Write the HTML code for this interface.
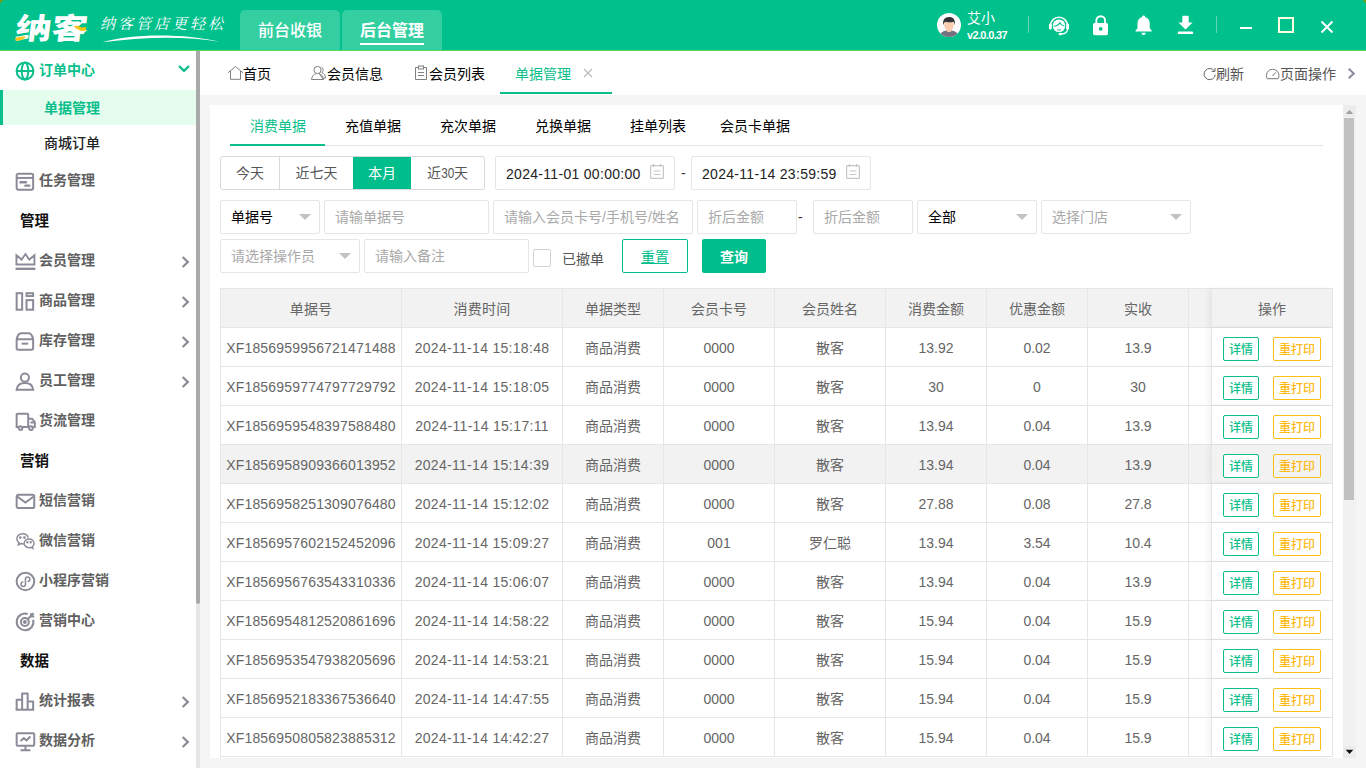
<!DOCTYPE html>
<html lang="zh-CN">
<head>
<meta charset="utf-8">
<title>单据管理</title>
<style>
*{box-sizing:border-box;margin:0;padding:0}
html,body{width:1366px;height:768px;overflow:hidden;background:#f5f5f5}
body{font-family:"Liberation Sans","Noto Sans CJK SC",sans-serif;font-size:14px;color:#333;position:relative}
.abs{position:absolute}
/* header */
#hd{position:absolute;left:0;top:0;width:1366px;height:51px;background:#00c08c;border-bottom:1px solid #52d866;border-radius:5px 5px 0 0}
.cnr{position:absolute;top:0;width:5px;height:5px;background:#7a9f04}
#logo{position:absolute;left:16px;top:7px;font-family:"Noto Sans CJK SC",sans-serif;font-weight:900;font-size:34px;line-height:40px;color:#fff;letter-spacing:0;transform:skewX(-7deg) scale(1.06,.86);transform-origin:0 50%;white-space:nowrap}
#slogan{position:absolute;left:100px;top:12px;font-family:"Noto Serif CJK SC",serif;font-style:italic;font-size:15px;line-height:22px;color:#fff;letter-spacing:3px;white-space:nowrap}
.htab{position:absolute;top:10px;height:40px;width:100px;background:#33cfa1;border-radius:5px 5px 0 0;color:#fff;font-size:16px;line-height:42px;text-align:center;font-weight:500}
.htab b{font-weight:700;display:inline-block;line-height:22px;border-bottom:2px solid #fff;padding-bottom:1px}
#user-name{position:absolute;left:967px;top:9px;color:#fff;font-size:14px;line-height:18px}
#user-ver{position:absolute;left:967px;top:28px;color:#fff;font-size:11px;line-height:14px;font-weight:700;letter-spacing:-.65px}
.vsep{position:absolute;top:16px;width:1px;height:17px;background:#5fd9b5}
/* tabs bar */
#tb{position:absolute;left:200px;top:51px;width:1166px;height:44px;background:#fff}
.tbi{position:absolute;top:1px;height:44px;line-height:44px;font-size:14px;color:#000;white-space:nowrap}
/* sidebar */
#sb{position:absolute;left:0;top:51px;width:196px;height:717px;background:#fff}
#sbs{position:absolute;left:196px;top:51px;width:4px;height:717px;background:#e6e6e6}
#sbs i{position:absolute;left:0;top:0;width:4px;height:553px;background:#aaa;border-radius:0 0 2px 2px}
.mi{position:absolute;left:0;width:196px;height:40px;line-height:40px;font-size:14px;color:#606060;font-weight:700}
.mi span{position:absolute;left:39px;top:0}
.mi svg.ic{position:absolute;left:14.5px;top:10.5px}
.mi svg.ar{position:absolute;left:180.5px;top:14.5px}
.mh{position:absolute;left:20px;height:40px;line-height:42px;font-size:14.5px;font-weight:700;color:#111}
/* card */
#card{position:absolute;left:210px;top:105px;width:1133px;height:653px;background:#fff;overflow:hidden}
#vs{position:absolute;left:1343px;top:105px;width:13px;height:653px;background:#f1f1f1}
#vs i{position:absolute;left:1px;top:13px;width:10px;height:382px;background:#c1c1c1}
#vs b{position:absolute;left:0;width:13px;height:12px;background:#ececec}
.itab{position:absolute;top:8px;height:32px;line-height:26px;font-size:14px;color:#000;white-space:nowrap}
.inp{position:absolute;height:34px;border:1px solid #e6e6e6;border-radius:2px;background:#fff;font-size:14px;line-height:32px;padding-left:10px;color:#000;white-space:nowrap;overflow:hidden}
.ph{color:#a9a9a9}
.dt{letter-spacing:.3px;color:#222;line-height:34px}
.inp .car{position:absolute;right:8.5px;top:13px;width:0;height:0;border:6px solid transparent;border-top:6px solid #c2c2c2;border-bottom:0}
/* table */
#tbl{position:absolute;left:10px;top:183px;width:1113px;height:480px;border-left:1px solid #e6e6e6;border-top:1px solid #e6e6e6}
.tr{position:absolute;left:0;width:1112px;height:39px;border-bottom:1px solid #e6e6e6;background:#fff}
.tr.h,.tr.hv{background:#f2f2f2}
.td{position:absolute;top:0;height:38px;line-height:40px;text-align:center;border-right:1px solid #e6e6e6;font-size:14px;color:#666;white-space:nowrap;overflow:hidden}
.c1{left:0;width:181px;letter-spacing:.18px}.c2{left:181px;width:161px;letter-spacing:.3px}.c3{left:342px;width:101px}.c4{left:443px;width:111px}.c5{left:554px;width:111px}.c6{left:665px;width:101px}.c7{left:766px;width:101px}.c8{left:867px;width:101px}.c9{left:968px;width:101px}
.fx{position:absolute;left:990px;top:0;width:122px;height:38px;border-left:1px solid #e6e6e6;border-right:1px solid #e6e6e6;background:inherit;text-align:center;line-height:40px;color:#666;box-shadow:-3px 0 6px rgba(0,0,0,.05)}
.b1,.b2{position:absolute;top:9px;height:24px;line-height:25px;font-size:12px;border-radius:2px;text-align:center;background:#fff;font-weight:500}
.b1{left:11px;width:36px;border:1px solid #0abf8b;color:#0abf8b}
.b2{left:61px;width:48px;border:1px solid #fdc011;color:#fdb913}
.tr.hv .b2{background:#f2f2f2}
</style>
</head>
<body>
<div class="cnr" style="left:0"></div><div class="cnr" style="left:1361px"></div>
<div id="hd">
  <div id="logo">纳客</div>
  <div id="slogan">纳客管店更轻松</div>
  <div class="htab" style="left:240px">前台收银</div>
  <div class="htab" style="left:342px"><b>后台管理</b></div>
  <div id="user-name">艾小</div>
  <div id="user-ver">v2.0.0.37</div>
  <div class="vsep" style="left:1028px"></div>
  <div class="vsep" style="left:1216px"></div>

<svg class="abs" style="left:937px;top:13px" width="24" height="24" viewBox="0 0 24 24">
  <defs><clipPath id="avc"><circle cx="12" cy="12" r="12"/></clipPath></defs>
  <circle cx="12" cy="12" r="12" fill="#fdfdfd"/>
  <g clip-path="url(#avc)">
    <path d="M2.5 25c0-5.5 3.5-7.5 9.5-7.500s9.5 2 9.5 7.500z" fill="#74727f"/>
    <rect x="10" y="14" width="4" height="5" fill="#f2c4a3"/>
    <ellipse cx="12" cy="12" rx="4.8" ry="5.5" fill="#f8cdb0"/>
    <path d="M6.3 12.200c-1-5.4 1.8-8.2 5.7-8.2 4 0 6.8 2.6 5.7 8.2-.3-1.8-.7-2.7-1.3-3.4-2.3.7-5.4.7-8 0-.9.7-1.6 1.8-2.1 3.400z" fill="#333236"/>
  </g>
</svg>
<svg class="abs" style="left:1047px;top:13px" width="24" height="24" viewBox="0 0 24 24">
  <path d="M3.3 13a8.7 8.7 0 0 1 17.4 0" stroke="#fff" stroke-width="1.5" fill="none"/>
  <rect x="2" y="10.5" width="2.8" height="6" rx="1.3" fill="#fff"/><rect x="19.2" y="10.5" width="2.8" height="6" rx="1.3" fill="#fff"/>
  <circle cx="12" cy="12.8" r="6.3" fill="#fff"/>
  <path d="M6.5 13.200c3 0 5.3-1.2 6.3-3.4 1 1.8 2.6 2.9 4.7 3.2" stroke="#00c08c" stroke-width="1.1" fill="none"/>
  <path d="M10.2 16.600c1.2.7 2.6.7 3.8 0" stroke="#00c08c" stroke-width="1" fill="none"/>
  <path d="M20.6 16c0 3-2.6 4.8-6.2 5" stroke="#fff" stroke-width="1.3" fill="none"/>
  <ellipse cx="13.3" cy="21" rx="1.8" ry="1.3" fill="#fff"/>
</svg>
<svg class="abs" style="left:1091px;top:13px" width="20" height="24" viewBox="0 0 20 24">
  <path d="M5.3 10.500V7.600a4.4 4.4 0 0 1 8.8 0v2.9" stroke="#fff" stroke-width="1.9" fill="none"/>
  <rect x="2" y="10" width="15" height="12.2" rx="1.6" fill="#fff"/>
  <circle cx="9.7" cy="15.8" r="1.9" fill="#00c08c"/>
</svg>
<svg class="abs" style="left:1132px;top:13px" width="24" height="24" viewBox="0 0 24 24">
  <path d="M11.6 2.600c.9 0 1.5.6 1.5 1.4 3 .8 4.6 3.3 4.6 6.500v4.700l2 2.600v.8H3.500v-.8l2-2.600v-4.700c0-3.2 1.6-5.7 4.6-6.5 0-.8.6-1.4 1.5-1.400z" fill="#fff"/>
  <path d="M9.4 19.800h4.400a2.2 2.2 0 0 1-4.4 0z" fill="#fff"/>
</svg>
<svg class="abs" style="left:1174px;top:13px" width="24" height="24" viewBox="0 0 24 24">
  <path d="M8.3 3.800a1 1 0 0 1 1-1h4.400a1 1 0 0 1 1 1v5.600h3.900l-7.1 7.2-7.1-7.200h3.900z" fill="#fff"/>
  <rect x="3.8" y="18.5" width="15.4" height="2.6" rx="1.2" fill="#fff"/>
</svg>
<div class="abs" style="left:1240px;top:27px;width:12px;height:2px;background:#fff"></div>
<div class="abs" style="left:1278px;top:17px;width:16px;height:16px;border:2px solid #feffe0"></div>
<svg class="abs" style="left:1319.5px;top:19.5px" width="14" height="14" viewBox="0 0 14 14"><path d="M1.5 1.500l11 11M12.5 1.500l-11 11" stroke="#fff" stroke-width="2" fill="none"/></svg>
<svg class="abs" style="left:100px;top:33px" width="130" height="12" viewBox="0 0 130 12"><path d="M2.5 9.200C28 1 82 -.6 119.5 8.8 84 2.2 40 4.3 2.5 9.200z" fill="#fff"/></svg>
<svg class="abs" style="left:10px;top:8px" width="90" height="40" viewBox="0 0 90 40"><path d="M5.3 29.700l9.5-1.5.8 1.2-5.7 3-4.3.4z" fill="#fdc50f"/><path d="M63.6 18.300l3.6-.6 4.6 1.7 4.3-.3-.3 3.3-4.7.5-4.6-2.500z" fill="#fdc50f"/></svg>

</div>
<div id="sb">

<div class="mi" style="top:0;height:39px;line-height:39px;color:#0abf8b">
 <svg class="ic" style="left:14px;top:9px" width="22" height="22" viewBox="0 0 22 22" fill="none" stroke="#0abf8b" stroke-width="2"><circle cx="11" cy="11" r="8.4"/><path d="M2.7 11h16.6"/><ellipse cx="11" cy="11" rx="3.3" ry="8.4"/></svg>
 <span>订单中心</span>
 <svg class="abs" style="left:177px;top:13px" width="14" height="9" viewBox="0 0 14 9"><path d="M2 2L7 6.8 12 2" stroke="#0abf8b" stroke-width="2.4" fill="none"/></svg>
</div>
<div class="abs" style="left:0;top:39px;width:196px;height:35px;background:#e5fdee;border-left:3px solid #0abf8b"></div>
<div class="mi" style="top:39px;height:35px;line-height:36px;color:#0abf8b"><span style="left:44px">单据管理</span></div>
<div class="mi" style="top:74px;height:35px;line-height:36px;color:#222;font-weight:500"><span style="left:44px">商城订单</span></div>
<div class="mi" style="top:109px"><svg class="ic" width="22" height="22" viewBox="0 0 20 20" fill="none" stroke="#8b8a98" stroke-width="1.8"><rect x="1.5" y="2.5" width="15" height="14.5" rx="1.5"/><path d="M1.5 6.300h15"/><path d="M5 10.300h5M9.5 13.300h3.5" stroke-width="2.2" stroke-linecap="round"/></svg><span>任务管理</span></div>
<div class="mi" style="top:189px"><svg class="ic" width="22" height="22" viewBox="0 0 20 20" fill="none" stroke="#8b8a98" stroke-width="1.8"><path d="M1.3 12.300v-8.500l4.7 4 3.5-5 3.5 5 4.7-4v8.500z" stroke-width="1.7"/><path d="M.5 16.200h18" stroke-width="2.2"/></svg><span>会员管理</span><svg class="ar" width="9" height="14" viewBox="0 0 9 14"><path d="M1.7 2L6.8 7l-5.1 5" stroke="#8b8a98" stroke-width="2.2" fill="none"/></svg></div>
<div class="mi" style="top:229px"><svg class="ic" width="22" height="22" viewBox="0 0 20 20" fill="none" stroke="#8b8a98" stroke-width="1.8"><rect x="1.5" y="2" width="5" height="15"/><rect x="10.5" y="2" width="6" height="2.6"/><rect x="10.5" y="8.3" width="6" height="8.7"/></svg><span>商品管理</span><svg class="ar" width="9" height="14" viewBox="0 0 9 14"><path d="M1.7 2L6.8 7l-5.1 5" stroke="#8b8a98" stroke-width="2.2" fill="none"/></svg></div>
<div class="mi" style="top:269px"><svg class="ic" width="22" height="22" viewBox="0 0 20 20" fill="none" stroke="#8b8a98" stroke-width="1.8"><path d="M1.5 8c.2-1.8.8-3.4 1.7-4.7.6-.9 1.3-1.3 2.3-1.300h7c1 0 1.7.4 2.3 1.3.9 1.3 1.5 2.9 1.7 4.7"/><rect x="1.5" y="7.5" width="15" height="9.5" rx="1"/><path d="M6 11.500h6"/></svg><span>库存管理</span><svg class="ar" width="9" height="14" viewBox="0 0 9 14"><path d="M1.7 2L6.8 7l-5.1 5" stroke="#8b8a98" stroke-width="2.2" fill="none"/></svg></div>
<div class="mi" style="top:309px"><svg class="ic" width="22" height="22" viewBox="0 0 20 20" fill="none" stroke="#8b8a98" stroke-width="1.8"><circle cx="9" cy="6" r="3.7"/><path d="M1.5 17c.5-4 3.5-6 7.5-6s7 2 7.5 6z"/></svg><span>员工管理</span><svg class="ar" width="9" height="14" viewBox="0 0 9 14"><path d="M1.7 2L6.8 7l-5.1 5" stroke="#8b8a98" stroke-width="2.2" fill="none"/></svg></div>
<div class="mi" style="top:349px"><svg class="ic" width="22" height="22" viewBox="0 0 20 20" fill="none" stroke="#8b8a98" stroke-width="1.8"><path d="M12 14.500H7M3 14.500H1.500v-11a1 1 0 0 1 1-1h8.500a1 1 0 0 1 1 1v11M12 7h3.500l2.5 3v4.500h-1.500M14 10.500h3"/><circle cx="5" cy="15.5" r="1.7"/><circle cx="14.5" cy="15.5" r="1.7"/></svg><span>货流管理</span></div>
<div class="mi" style="top:429px"><svg class="ic" width="22" height="22" viewBox="0 0 20 20" fill="none" stroke="#8b8a98" stroke-width="1.8"><rect x="1.5" y="3.5" width="16" height="12" rx="1.5"/><path d="M2 5l7.5 5.500L17 5"/></svg><span>短信营销</span></div>
<div class="mi" style="top:469px"><svg class="ic" width="22" height="22" viewBox="0 0 20 20" fill="none" stroke="#8b8a98" stroke-width="1.8"><g transform="scale(.92 .95) translate(.3 .8)" stroke-width="1.4"><path d="M8.5 11.500c-1 .1-2 0-2.8-.3L3 12.500l.6-2.200C2.3 9.4 1.5 8.1 1.5 6.600c0-2.7 2.6-4.8 5.7-4.8 2.8 0 5.1 1.6 5.6 3.8"/><path d="M18.5 11c0-2.3-2.2-4.2-4.9-4.200S8.7 8.7 8.7 11s2.2 4.2 4.9 4.200c.6 0 1.2-.1 1.8-.3l2 1-.5-1.800c1-.8 1.6-1.9 1.6-3.100z"/><circle cx="5" cy="5.5" r=".6" fill="#8b8a98"/><circle cx="9" cy="5.5" r=".6" fill="#8b8a98"/><circle cx="12" cy="10" r=".5" fill="#8b8a98"/><circle cx="15.2" cy="10" r=".5" fill="#8b8a98"/></g></svg><span>微信营销</span></div>
<div class="mi" style="top:509px"><svg class="ic" width="22" height="22" viewBox="0 0 20 20" fill="none" stroke="#8b8a98" stroke-width="1.8"><circle cx="9.5" cy="9.5" r="8"/><path d="M9.5 7.500v4.500a2 2 0 1 1-2-2M9.5 12V7.500a2 2 0 1 1 2 2" stroke-width="1.4"/></svg><span>小程序营销</span></div>
<div class="mi" style="top:549px"><svg class="ic" width="22" height="22" viewBox="0 0 20 20" fill="none" stroke="#8b8a98" stroke-width="1.8"><path d="M16.5 8a7.6 7.6 0 1 1-5-5.3"/><circle cx="9" cy="10" r="3.6"/><circle cx="9" cy="10" r=".9" fill="#8b8a98"/><path d="M11 8l6-6M14.5 2v3h3"/></svg><span>营销中心</span></div>
<div class="mi" style="top:629px"><svg class="ic" width="22" height="22" viewBox="0 0 20 20" fill="none" stroke="#8b8a98" stroke-width="1.8"><path d="M1.5 17V8h5v9M6.5 17V2.300h5V17M11.5 17V9.500h5V17" stroke-linejoin="round"/><path d="M1.5 17h15" stroke-linecap="square"/></svg><span>统计报表</span><svg class="ar" width="9" height="14" viewBox="0 0 9 14"><path d="M1.7 2L6.8 7l-5.1 5" stroke="#8b8a98" stroke-width="2.2" fill="none"/></svg></div>
<div class="mi" style="top:669px"><svg class="ic" width="22" height="22" viewBox="0 0 20 20" fill="none" stroke="#8b8a98" stroke-width="1.8"><rect x="1.5" y="2" width="16" height="11.5" rx="1"/><path d="M9.5 13.500v3.500M5 17.500h9M5 9l3-2.5 2.5 2 3.5-3.5"/></svg><span>数据分析</span><svg class="ar" width="9" height="14" viewBox="0 0 9 14"><path d="M1.7 2L6.8 7l-5.1 5" stroke="#8b8a98" stroke-width="2.2" fill="none"/></svg></div>
<div class="mh" style="top:149px">管理</div>
<div class="mh" style="top:389px">营销</div>
<div class="mh" style="top:589px">数据</div>

</div>
<div id="sbs"><i></i></div>
<div id="tb">

<svg class="abs" style="left:26.500px;top:14px" width="17" height="16" viewBox="0 0 17 16"><path d="M1 7.800L8.5 1.5 16 7.800M3.5 6v8.300h10V6" stroke="#808080" stroke-width="1" fill="none"/></svg>
<div class="tbi" style="left:43px">首页</div>
<svg class="abs" style="left:110px;top:14px" width="17" height="16" viewBox="0 0 17 16"><circle cx="7.5" cy="5" r="3.6" stroke="#808080" fill="none"/><path d="M1.5 14.500c.3-3.5 2.5-5.2 4.4-5.700M9.2 8.800c2 .5 4 2.2 4.3 5.700zM1.5 14.500h12" stroke="#808080" fill="none"/><path d="M11.5 2.200c1.7.6 2.3 3.6.3 5.3 2 .8 3.5 2.6 3.7 5.500h-1.5" stroke="#808080" fill="none"/></svg>
<div class="tbi" style="left:127px">会员信息</div>
<svg class="abs" style="left:214px;top:14px" width="15" height="16" viewBox="0 0 15 16"><path d="M4.5 2.500H1.500v12h11v-12h-3" stroke="#808080" fill="none"/><rect x="4.5" y="1" width="5" height="3" stroke="#808080" fill="none"/><path d="M4 7.500h6M4 10.500h6" stroke="#808080"/></svg>
<div class="tbi" style="left:229px">会员列表</div>
<div class="tbi" style="left:315px;color:#0abf8b">单据管理</div>
<svg class="abs" style="left:383px;top:17px" width="10" height="10" viewBox="0 0 10 10"><path d="M1 1l8 8M9 1l-8 8" stroke="#bbb" stroke-width="1.2"/></svg>
<div class="abs" style="left:300px;top:41px;width:112px;height:2px;background:#0abf8b"></div>
<svg class="abs" style="left:1003px;top:16px" width="14" height="14" viewBox="0 0 14 14"><path d="M11.4 4A5.6 5.6 0 1 0 12.3 7.6" stroke="#666" fill="none"/><path d="M12 1v3.400H8.6" stroke="#666" fill="none"/></svg>
<div class="tbi" style="left:1016px;color:#555">刷新</div>
<svg class="abs" style="left:1065px;top:16px" width="16" height="13" viewBox="0 0 16 13"><path d="M2.2 11.700A6.3 6.3 0 1 1 13.2 11.700z" stroke="#777" fill="none"/><path d="M7.5 9l3.2-3.6" stroke="#777" fill="none"/></svg>
<div class="tbi" style="left:1080px;color:#555">页面操作</div>
<svg class="abs" style="left:1147px;top:16px" width="9" height="13" viewBox="0 0 9 13"><path d="M1.7 1.700L6.8 6.500l-5.1 4.8" stroke="#8b8a98" stroke-width="2" fill="none"/></svg>

</div>
<div id="card">
<div class="itab" style="left:40px;color:#0abf8b">消费单据</div>
<div class="itab" style="left:135px">充值单据</div>
<div class="itab" style="left:230px">充次单据</div>
<div class="itab" style="left:325px">兑换单据</div>
<div class="itab" style="left:420px">挂单列表</div>
<div class="itab" style="left:510px">会员卡单据</div>
<div class="abs" style="left:20px;top:40px;width:1093px;height:1px;background:#e6e6e6"></div>
<div class="abs" style="left:20px;top:39px;width:95px;height:2px;background:#0abf8b"></div>
<div class="abs" style="left:10px;top:51px;width:265px;height:34px;border:1px solid #d9d9d9;border-radius:3px;overflow:hidden;background:#fff;font-size:14px;line-height:32px;color:#555;text-align:center">
<div class="abs" style="left:0;top:0;width:59px;height:32px;border-right:1px solid #d9d9d9">今天</div>
<div class="abs" style="left:59px;top:0;width:73px;height:32px">近七天</div>
<div class="abs" style="left:132px;top:0;width:58px;height:32px;background:#00be8c;color:#fff">本月</div>
<div class="abs" style="left:190px;top:0;width:73px;height:32px">近<span style="display:inline-block;transform:scaleX(.84);margin:0 -1.300px">30</span>天</div>
</div>
<div class="inp dt" style="left:285px;top:51px;width:180px">2024-11-01 00:00:00<svg class="abs" style="right:9px;top:6px" width="16" height="18" viewBox="0 0 16 18" fill="none" stroke="#c6c6c6" stroke-width="1.2"><rect x="1.6" y="2.6" width="12.8" height="12.8" rx="1"/><path d="M4.5 1v3M11.5 1v3M4.5 8h7M4.5 11.500h7"/></svg></div>
<div class="abs" style="left:471px;top:51px;line-height:34px;color:#333">-</div>
<div class="inp dt" style="left:481px;top:51px;width:180px">2024-11-14 23:59:59<svg class="abs" style="right:9px;top:6px" width="16" height="18" viewBox="0 0 16 18" fill="none" stroke="#c6c6c6" stroke-width="1.2"><rect x="1.6" y="2.6" width="12.8" height="12.8" rx="1"/><path d="M4.5 1v3M11.5 1v3M4.5 8h7M4.5 11.500h7"/></svg></div>
<div class="inp" style="left:10px;top:95px;width:100px">单据号<i class="car"></i></div>
<div class="inp ph" style="left:114px;top:95px;width:165px">请输单据号</div>
<div class="inp ph" style="left:283px;top:95px;width:200px">请输入会员卡号/手机号/姓名</div>
<div class="inp ph" style="left:487px;top:95px;width:100px">折后金额</div>
<div class="abs" style="left:588px;top:95px;line-height:34px;color:#333">-</div>
<div class="inp ph" style="left:603px;top:95px;width:100px">折后金额</div>
<div class="inp" style="left:707px;top:95px;width:120px">全部<i class="car"></i></div>
<div class="inp ph" style="left:831px;top:95px;width:150px">选择门店<i class="car"></i></div>
<div class="inp ph" style="left:10px;top:134px;width:140px">请选择操作员<i class="car"></i></div>
<div class="inp ph" style="left:154px;top:134px;width:165px">请输入备注</div>
<div class="abs" style="left:323px;top:144px;width:18px;height:18px;border:1px solid #d2d2d2;border-radius:2px;background:#fff"></div>
<div class="abs" style="left:352px;top:134px;line-height:40px;color:#555;font-size:14px">已撤单</div>
<div class="abs" style="left:412px;top:134px;width:66px;height:34px;border:1px solid #00be8c;border-radius:2px;line-height:35px;text-align:center;color:#00be8c;font-size:14px;background:#fff"><span style="text-decoration:underline">重置</span></div>
<div class="abs" style="left:492px;top:134px;width:64px;height:34px;border-radius:2px;line-height:36px;text-align:center;color:#fff;font-size:14px;font-weight:700;background:#00be8c">查询</div>
<div id="tbl">
<div class="tr h" style="top:0"><div class="td c1">单据号</div><div class="td c2">消费时间</div><div class="td c3">单据类型</div><div class="td c4">会员卡号</div><div class="td c5">会员姓名</div><div class="td c6">消费金额</div><div class="td c7">优惠金额</div><div class="td c8">实收</div><div class="td c9"></div><div class="fx">操作</div></div>
<div class="tr" style="top:39px"><div class="td c1">XF1856959956721471488</div><div class="td c2">2024-11-14 15:18:48</div><div class="td c3">商品消费</div><div class="td c4">0000</div><div class="td c5">散客</div><div class="td c6">13.92</div><div class="td c7">0.02</div><div class="td c8">13.9</div><div class="td c9"></div><div class="fx"><div class="b1">详情</div><div class="b2">重打印</div></div></div>
<div class="tr" style="top:78px"><div class="td c1">XF1856959774797729792</div><div class="td c2">2024-11-14 15:18:05</div><div class="td c3">商品消费</div><div class="td c4">0000</div><div class="td c5">散客</div><div class="td c6">30</div><div class="td c7">0</div><div class="td c8">30</div><div class="td c9"></div><div class="fx"><div class="b1">详情</div><div class="b2">重打印</div></div></div>
<div class="tr" style="top:117px"><div class="td c1">XF1856959548397588480</div><div class="td c2">2024-11-14 15:17:11</div><div class="td c3">商品消费</div><div class="td c4">0000</div><div class="td c5">散客</div><div class="td c6">13.94</div><div class="td c7">0.04</div><div class="td c8">13.9</div><div class="td c9"></div><div class="fx"><div class="b1">详情</div><div class="b2">重打印</div></div></div>
<div class="tr hv" style="top:156px"><div class="td c1">XF1856958909366013952</div><div class="td c2">2024-11-14 15:14:39</div><div class="td c3">商品消费</div><div class="td c4">0000</div><div class="td c5">散客</div><div class="td c6">13.94</div><div class="td c7">0.04</div><div class="td c8">13.9</div><div class="td c9"></div><div class="fx"><div class="b1">详情</div><div class="b2">重打印</div></div></div>
<div class="tr" style="top:195px"><div class="td c1">XF1856958251309076480</div><div class="td c2">2024-11-14 15:12:02</div><div class="td c3">商品消费</div><div class="td c4">0000</div><div class="td c5">散客</div><div class="td c6">27.88</div><div class="td c7">0.08</div><div class="td c8">27.8</div><div class="td c9"></div><div class="fx"><div class="b1">详情</div><div class="b2">重打印</div></div></div>
<div class="tr" style="top:234px"><div class="td c1">XF1856957602152452096</div><div class="td c2">2024-11-14 15:09:27</div><div class="td c3">商品消费</div><div class="td c4">001</div><div class="td c5">罗仁聪</div><div class="td c6">13.94</div><div class="td c7">3.54</div><div class="td c8">10.4</div><div class="td c9"></div><div class="fx"><div class="b1">详情</div><div class="b2">重打印</div></div></div>
<div class="tr" style="top:273px"><div class="td c1">XF1856956763543310336</div><div class="td c2">2024-11-14 15:06:07</div><div class="td c3">商品消费</div><div class="td c4">0000</div><div class="td c5">散客</div><div class="td c6">13.94</div><div class="td c7">0.04</div><div class="td c8">13.9</div><div class="td c9"></div><div class="fx"><div class="b1">详情</div><div class="b2">重打印</div></div></div>
<div class="tr" style="top:312px"><div class="td c1">XF1856954812520861696</div><div class="td c2">2024-11-14 14:58:22</div><div class="td c3">商品消费</div><div class="td c4">0000</div><div class="td c5">散客</div><div class="td c6">15.94</div><div class="td c7">0.04</div><div class="td c8">15.9</div><div class="td c9"></div><div class="fx"><div class="b1">详情</div><div class="b2">重打印</div></div></div>
<div class="tr" style="top:351px"><div class="td c1">XF1856953547938205696</div><div class="td c2">2024-11-14 14:53:21</div><div class="td c3">商品消费</div><div class="td c4">0000</div><div class="td c5">散客</div><div class="td c6">15.94</div><div class="td c7">0.04</div><div class="td c8">15.9</div><div class="td c9"></div><div class="fx"><div class="b1">详情</div><div class="b2">重打印</div></div></div>
<div class="tr" style="top:390px"><div class="td c1">XF1856952183367536640</div><div class="td c2">2024-11-14 14:47:55</div><div class="td c3">商品消费</div><div class="td c4">0000</div><div class="td c5">散客</div><div class="td c6">15.94</div><div class="td c7">0.04</div><div class="td c8">15.9</div><div class="td c9"></div><div class="fx"><div class="b1">详情</div><div class="b2">重打印</div></div></div>
<div class="tr" style="top:429px"><div class="td c1">XF1856950805823885312</div><div class="td c2">2024-11-14 14:42:27</div><div class="td c3">商品消费</div><div class="td c4">0000</div><div class="td c5">散客</div><div class="td c6">15.94</div><div class="td c7">0.04</div><div class="td c8">15.9</div><div class="td c9"></div><div class="fx"><div class="b1">详情</div><div class="b2">重打印</div></div></div>
</div>

</div>
<div id="vs"><i></i>
<b style="top:0"></b><b style="top:641px"></b>
<svg class="abs" style="left:0;top:0" width="13" height="12" viewBox="0 0 13 12"><path d="M2.8 9l3.7-4.200L10.2 9z" fill="#a3a3a3"/></svg>
<svg class="abs" style="left:0;top:641px" width="13" height="12" viewBox="0 0 13 12"><path d="M2.7 3.800l3.8 4.3 3.8-4.300z" fill="#111"/></svg>
</div>
</body>
</html>
